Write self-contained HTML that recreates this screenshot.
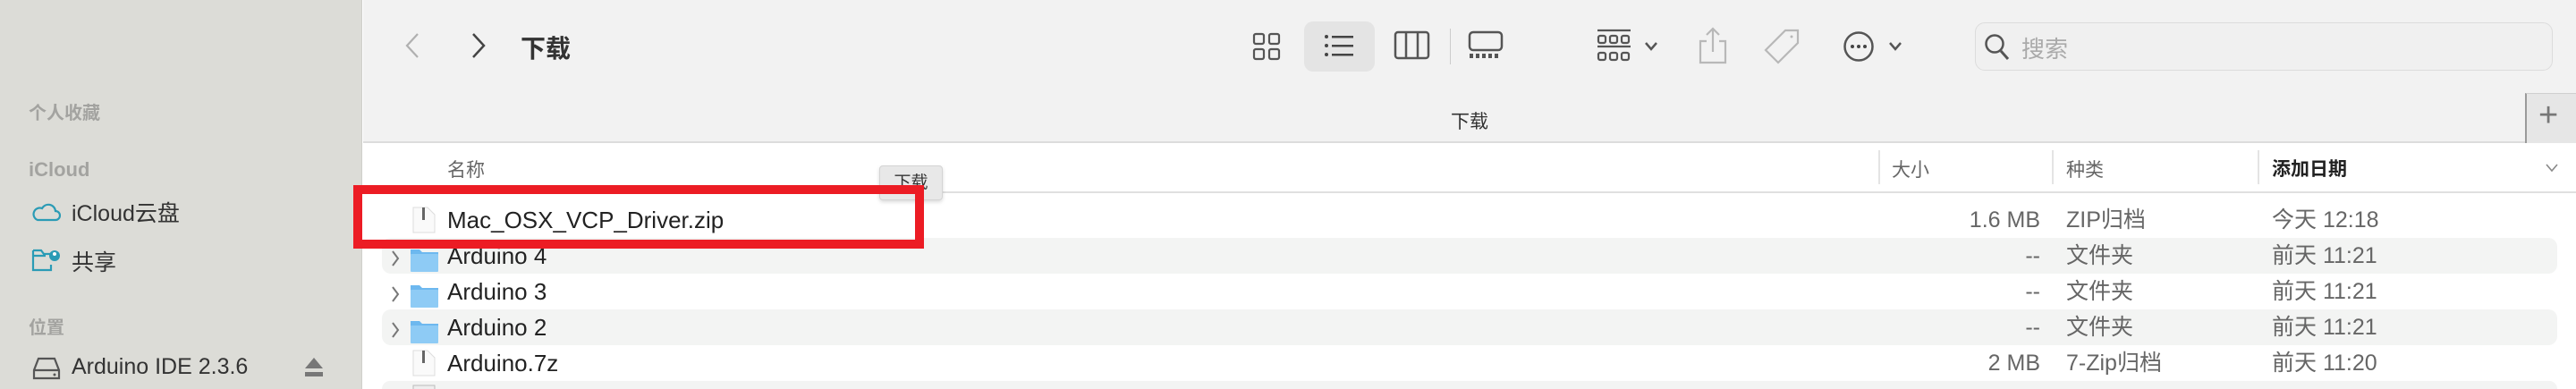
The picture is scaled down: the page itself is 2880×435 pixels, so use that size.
<!DOCTYPE html>
<html style="width:2880px;height:435px;overflow:hidden"><head><meta charset="utf-8"><style>
*{margin:0;padding:0;box-sizing:border-box}
body{width:2880px;height:435px;overflow:hidden;position:relative;background:#fff;font-family:"Liberation Sans","Noto Sans CJK SC",sans-serif;color:#222}
.a{position:absolute;white-space:nowrap}
.side{left:0;top:0;width:405px;height:435px;background:#dcdcd7;border-right:1px solid #cfcfcb}
.sh{font-size:20px;color:#a3a3a0;font-weight:bold;left:32px}
.si{font-size:25px;color:#333;left:80px}
.tb{left:406px;top:0;width:2474px;height:160px;background:#f2f2f2;border-bottom:2px solid #dcdcdc}
.row{left:427px;width:2432px;height:40px;border-radius:10px}
.st{background:#f3f4f3}
.t{font-size:26px;color:#222;line-height:40px}
.g{font-size:25px;color:#666;line-height:40px}
.ic{fill:none;stroke-width:2.5}
</style></head><body>
<div class="a side"></div>
<div class="a sh" style="top:110px">个人收藏</div>
<div class="a sh" style="top:177px;font-size:22px">iCloud</div>
<svg class="a" style="left:36px;top:222px" width="32" height="26"><path d="M6 24h20a5 5 0 0 0 0-10a8 8 0 0 0-15-3a6 6 0 0 0-5 13z" fill="none" stroke="#2a9bb5" stroke-width="2.2"/></svg>
<div class="a si" style="top:219px">iCloud云盘</div>
<svg class="a" style="left:35px;top:276px" width="32" height="30"><path d="M2 4h9l3 4h7M2 4v22h20v-6M2 10h14" fill="none" stroke="#2a9bb5" stroke-width="2.2"/><circle cx="26" cy="10" r="6" fill="#2a9bb5"/><circle cx="26" cy="8" r="2" fill="#fff"/></svg>
<div class="a si" style="top:274px">共享</div>
<div class="a sh" style="top:350px">位置</div>
<svg class="a" style="left:36px;top:398px" width="32" height="28"><path d="M7 3h18l5 13v9H2v-9z M2 16h28" fill="none" stroke="#555" stroke-width="2.2"/><circle cx="25" cy="21" r="1.5" fill="#555"/></svg>
<div class="a si" style="top:396px">Arduino IDE 2.3.6</div>
<svg class="a" style="left:340px;top:398px" width="22" height="26"><path d="M11 2L21 14H1z" fill="#777"/><rect x="1" y="18" width="20" height="5" fill="#777"/></svg>

<div class="a tb"></div>
<svg class="a" style="left:450px;top:36px" width="22" height="30"><path d="M17 2L5 15l12 13" fill="none" stroke="#b0b0b0" stroke-width="2.2"/></svg>
<svg class="a" style="left:524px;top:36px" width="22" height="30"><path d="M5 2l12 13L5 28" fill="none" stroke="#444" stroke-width="2.5"/></svg>
<div class="a" style="left:582px;top:33px;font-size:28px;font-weight:bold;color:#333">下载</div>
<svg class="a" style="left:1400px;top:36px" width="34" height="32"><g fill="none" stroke="#555" stroke-width="2.2"><rect x="2" y="2" width="11" height="11" rx="2"/><rect x="19" y="2" width="11" height="11" rx="2"/><rect x="2" y="19" width="11" height="11" rx="2"/><rect x="19" y="19" width="11" height="11" rx="2"/></g></svg>
<div class="a" style="left:1458px;top:24px;width:79px;height:56px;background:#e4e4e4;border-radius:10px"></div>
<svg class="a" style="left:1480px;top:36px" width="36" height="30"><g fill="#444"><circle cx="3" cy="5" r="2"/><circle cx="3" cy="15" r="2"/><circle cx="3" cy="25" r="2"/><rect x="9" y="4" width="24" height="2.5"/><rect x="9" y="14" width="24" height="2.5"/><rect x="9" y="24" width="24" height="2.5"/></g></svg>
<svg class="a" style="left:1558px;top:34px" width="42" height="34"><g fill="none" stroke="#555" stroke-width="2.5"><rect x="2" y="2" width="37" height="29" rx="3"/><path d="M14 2v29M27 2v29"/></g></svg>
<div class="a" style="left:1621px;top:32px;width:1px;height:40px;background:#ccc"></div>
<svg class="a" style="left:1641px;top:34px" width="40" height="32"><g fill="none" stroke="#555" stroke-width="2.5"><rect x="2" y="2" width="36" height="20" rx="4"/></g><g fill="#555"><rect x="2" y="26" width="4" height="5"/><rect x="9" y="26" width="4" height="5"/><rect x="16" y="26" width="4" height="5"/><rect x="23" y="26" width="4" height="5"/><rect x="30" y="26" width="4" height="5"/></g></svg>
<svg class="a" style="left:1785px;top:32px" width="40" height="38"><g fill="none" stroke="#555" stroke-width="2.2"><path d="M1 2h37M1 20h37"/><rect x="2" y="8" width="8" height="8" rx="2"/><rect x="15" y="8" width="8" height="8" rx="2"/><rect x="28" y="8" width="8" height="8" rx="2"/><rect x="2" y="27" width="8" height="8" rx="2"/><rect x="15" y="27" width="8" height="8" rx="2"/><rect x="28" y="27" width="8" height="8" rx="2"/></g></svg>
<svg class="a" style="left:1838px;top:46px" width="16" height="12"><path d="M2 2l6 7 6-7" fill="none" stroke="#555" stroke-width="2.5"/></svg>
<svg class="a" style="left:1898px;top:30px" width="34" height="42"><g fill="none" stroke="#b8b8b8" stroke-width="2.2"><path d="M10 16H3v24h28V16h-7M17 2v26M10 9l7-7 7 7"/></g></svg>
<svg class="a" style="left:1972px;top:32px" width="42" height="40"><g fill="none" stroke="#b8b8b8" stroke-width="2.2"><path d="M24 2h14v14L16 38 2 24z"/></g><circle cx="31" cy="9" r="1.5" fill="#b8b8b8"/></svg>
<svg class="a" style="left:2060px;top:34px" width="38" height="38"><circle cx="18" cy="18" r="15.5" fill="none" stroke="#555" stroke-width="2.5"/><g fill="#444"><circle cx="11" cy="18" r="2"/><circle cx="18" cy="18" r="2"/><circle cx="25" cy="18" r="2"/></g></svg>
<svg class="a" style="left:2111px;top:46px" width="16" height="12"><path d="M2 2l6 7 6-7" fill="none" stroke="#555" stroke-width="2.5"/></svg>
<div class="a" style="left:2208px;top:25px;width:646px;height:54px;border:1px solid #dcdcdc;border-radius:11px;background:#f0f0f0"></div>
<svg class="a" style="left:2218px;top:37px" width="30" height="32"><circle cx="12" cy="12" r="9.5" fill="none" stroke="#555" stroke-width="2.5"/><path d="M19 20l8 9" fill="none" stroke="#555" stroke-width="3"/></svg>
<div class="a" style="left:2260px;top:35px;font-size:26px;color:#aaa">搜索</div>
<div class="a" style="left:1622px;top:120px;font-size:21px;color:#333">下载</div>
<div class="a" style="left:2823px;top:104px;width:57px;height:56px;background:#e6e6e6;border-left:2px solid #9a9a9a;border-top:1px solid #cfcfcf"></div>
<div class="a" style="left:2838px;top:108px;font-size:38px;color:#777;font-weight:200">+</div>

<div class="a" style="left:406px;top:214px;width:2474px;height:2px;background:#e0e0e0"></div>
<div class="a" style="left:500px;top:174px;font-size:21px;color:#666">名称</div>
<div class="a" style="left:2100px;top:168px;width:2px;height:38px;background:#e4e4e4"></div>
<div class="a" style="left:2115px;top:174px;font-size:21px;color:#666">大小</div>
<div class="a" style="left:2294px;top:168px;width:2px;height:38px;background:#e4e4e4"></div>
<div class="a" style="left:2310px;top:174px;font-size:21px;color:#666">种类</div>
<div class="a" style="left:2524px;top:168px;width:2px;height:38px;background:#e4e4e4"></div>
<div class="a" style="left:2540px;top:173px;font-size:21px;color:#222;font-weight:bold">添加日期</div>
<svg class="a" style="left:2845px;top:182px" width="16" height="12"><path d="M2 2l6 7 6-7" fill="none" stroke="#888" stroke-width="1.6"/></svg>

<div class="a row st" style="top:266px"></div>
<div class="a row st" style="top:346px"></div>
<div class="a st" style="left:427px;width:2432px;top:426px;height:9px;border-radius:10px 10px 0 0"></div>

<svg class="a" style="left:461px;top:231px" width="26" height="30"><path d="M1 1h16l8 8v20H1z" fill="#fafafa" stroke="#ddd"/><rect x="11" y="1" width="3" height="14" fill="#666"/></svg>
<svg class="a" style="left:461px;top:391px" width="26" height="30"><path d="M1 1h16l8 8v20H1z" fill="#fafafa" stroke="#ddd"/><rect x="11" y="1" width="3" height="14" fill="#666"/></svg>
<svg class="a" style="left:461px;top:430px" width="26" height="5"><rect x="1" y="1" width="24" height="6" fill="#eee" stroke="#bbb"/></svg>
<svg class="a" style="left:436px;top:276px" width="56" height="30"><path d="M3 5l6 8-6 8" fill="none" stroke="#777" stroke-width="2"/><path d="M23 3h10l3 3h18v21H23z" fill="#6db8ef"/><rect x="23" y="8" width="31" height="20" fill="#8ecbf5" rx="1"/></svg>
<svg class="a" style="left:436px;top:316px" width="56" height="30"><path d="M3 5l6 8-6 8" fill="none" stroke="#777" stroke-width="2"/><path d="M23 3h10l3 3h18v21H23z" fill="#6db8ef"/><rect x="23" y="8" width="31" height="20" fill="#8ecbf5" rx="1"/></svg>
<svg class="a" style="left:436px;top:356px" width="56" height="30"><path d="M3 5l6 8-6 8" fill="none" stroke="#777" stroke-width="2"/><path d="M23 3h10l3 3h18v21H23z" fill="#6db8ef"/><rect x="23" y="8" width="31" height="20" fill="#8ecbf5" rx="1"/></svg>

<div class="a t" style="left:500px;top:226px">Mac_OSX_VCP_Driver.zip</div>
<div class="a t" style="left:500px;top:266px">Arduino 4</div>
<div class="a t" style="left:500px;top:306px">Arduino 3</div>
<div class="a t" style="left:500px;top:346px">Arduino 2</div>
<div class="a t" style="left:500px;top:386px">Arduino.7z</div>

<div class="a g" style="left:2080px;width:201px;text-align:right;top:226px">1.6 MB</div>
<div class="a g" style="left:2080px;width:201px;text-align:right;top:266px">--</div>
<div class="a g" style="left:2080px;width:201px;text-align:right;top:306px">--</div>
<div class="a g" style="left:2080px;width:201px;text-align:right;top:346px">--</div>
<div class="a g" style="left:2080px;width:201px;text-align:right;top:386px">2 MB</div>
<div class="a g" style="left:2310px;top:226px">ZIP归档</div>
<div class="a g" style="left:2310px;top:266px">文件夹</div>
<div class="a g" style="left:2310px;top:306px">文件夹</div>
<div class="a g" style="left:2310px;top:346px">文件夹</div>
<div class="a g" style="left:2310px;top:386px">7-Zip归档</div>
<div class="a g" style="left:2540px;top:226px">今天 12:18</div>
<div class="a g" style="left:2540px;top:266px">前天 11:21</div>
<div class="a g" style="left:2540px;top:306px">前天 11:21</div>
<div class="a g" style="left:2540px;top:346px">前天 11:21</div>
<div class="a g" style="left:2540px;top:386px">前天 11:20</div>

<div class="a" style="left:983px;top:185px;width:71px;height:39px;background:#e8e8e8;border:1px solid #d4d4d4;border-radius:4px;box-shadow:0 2px 4px rgba(0,0,0,.15);font-size:19px;color:#333;text-align:center;line-height:37px">下载</div>
<div class="a" style="left:395px;top:207px;width:638px;height:71px;border:10px solid #ec1c24"></div>
</body></html>
